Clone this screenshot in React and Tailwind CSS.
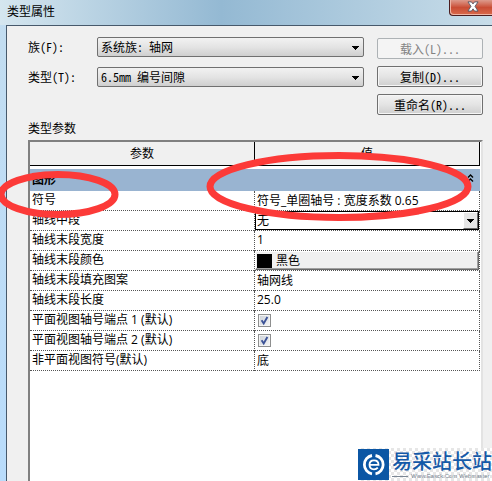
import clsx from 'clsx';

const ROWS = [
  { id: 'symbol', name: '符号', type: 'text', value: '符号_单圈轴号 : 宽度系数 0.65' },
  { id: 'mid', name: '轴线中段', type: 'select', value: '无' },
  { id: 'end-width', name: '轴线末段宽度', type: 'text', value: '1' },
  { id: 'end-color', name: '轴线末段颜色', type: 'color', value: '黑色' },
  { id: 'end-pattern', name: '轴线末段填充图案', type: 'text', value: '轴网线' },
  { id: 'end-length', name: '轴线末段长度', type: 'text', value: '25.0' },
  { id: 'plan-end-1', name: '平面视图轴号端点 1 (默认)', type: 'check' },
  { id: 'plan-end-2', name: '平面视图轴号端点 2 (默认)', type: 'check' },
  { id: 'non-plan', name: '非平面视图符号(默认)', type: 'text', value: '底' },
];

function Arrow({ className }) {
  return (
    <svg className={clsx('pointer-events-none', className)} width="7" height="4" viewBox="0 0 7 4" shapeRendering="crispEdges">
      <path d="M0 0h7v1H6v1H5v1H4v1H3V3H2V2H1V1H0z" fill="#000" />
    </svg>
  );
}

function ComboRow({ id, label, value }) {
  return (
    <div className="flex items-center">
      <label htmlFor={id} className="w-[69px] shrink-0">{label}</label>
      <div className="relative flex-1">
        <select
          id={id}
          className="block w-full h-5 pl-[3px] appearance-none rounded-[2px] border border-[#707070] bg-linear-to-b from-[#f2f2f2] via-[#e4e4e4] to-[#cfcfcf] leading-[18px]"
        >
          <option>{value}</option>
        </select>
        <Arrow className="absolute right-[5px] top-[9px]" />
      </div>
    </div>
  );
}

function DialogButton({ children, disabled }) {
  return (
    <button
      type="button"
      disabled={disabled}
      className={clsx(
        'h-[21px] rounded-[2px] border leading-[18px]',
        disabled
          ? 'border-[#adb2b5] bg-[#f4f4f4] text-[#838383]'
          : 'border-[#707070] bg-linear-to-b from-[#f2f2f2] via-[#e4e4e4] to-[#cfcfcf] shadow-[inset_0_0_0_1px_#f6f6f6]'
      )}
    >
      {children}
    </button>
  );
}

function Value({ row }) {
  if (row.type === 'select') {
    return (
      <div className="relative">
        <select id={row.id} className="block w-full h-[19px] pl-px appearance-none border border-black bg-white leading-4">
          <option>{row.value}</option>
        </select>
        <span className="pointer-events-none absolute right-px top-px flex h-[17px] w-[15px] items-center justify-center border border-t-white border-l-white border-r-[#696969] border-b-[#696969] bg-[#e6e6e6]">
          <Arrow />
        </span>
      </div>
    );
  }
  if (row.type === 'color') {
    return (
      <button
        id={row.id}
        type="button"
        className="flex h-[19px] w-full items-center gap-1 border border-t-white border-l-white border-r-[#696969] border-b-[#696969] bg-[#f0f0f0] pl-px shadow-[inset_-1px_-1px_0_#a0a0a0]"
      >
        <span className="h-[14px] w-[15px] bg-black" />
        {row.value}
      </button>
    );
  }
  if (row.type === 'check') {
    return (
      <div className="relative flex h-[19px] items-center pl-[3px]">
        <input
          id={row.id}
          type="checkbox"
          defaultChecked
          className="peer size-[13px] appearance-none border border-[#8e8f8f] bg-linear-to-br from-[#cdd2d8] to-[#f6f6f6] shadow-[inset_0_0_0_1px_#f4f4f4]"
        />
        <svg className="pointer-events-none absolute left-[3px] hidden peer-checked:block" width="13" height="13" viewBox="0 0 13 13">
          <path d="M3.6 6.2l2.1 3.2L9.4 3" fill="none" stroke="#3d5397" strokeWidth="1.9" />
        </svg>
      </div>
    );
  }
  return (
    <input id={row.id} type="text" defaultValue={row.value} className="block h-[19px] w-full bg-transparent pb-[2px] pl-[2px] outline-none" />
  );
}

function ParameterTable() {
  return (
    <table className="w-full table-fixed border-separate border-spacing-0 font-['Open_Sans','Noto_Sans_CJK_SC',sans-serif] text-xs leading-4">
      <thead>
        <tr className="h-6 bg-[#f0f0f0]">
          <th className="w-[224px] border-b border-black p-0 font-normal">参数</th>
          <th className="border-x border-b border-black p-0 font-normal">值</th>
        </tr>
      </thead>
      <tbody>
        <tr className="h-[25px]">
          <td colSpan={2} className="border-t-3 border-white bg-[#99b4d1] px-[2px] py-0">
            <div className="flex items-center justify-between pr-1 font-bold">
              图形
              <button type="button" aria-label="折叠" className="pb-1">
                <svg width="7" height="8" viewBox="0 0 7 8" fill="none" stroke="#000" strokeWidth="1.4">
                  <path d="M1 3.5L3.5 1L6 3.5M1 7.5L3.5 5L6 7.5" />
                </svg>
              </button>
            </div>
          </td>
        </tr>
        {ROWS.map((row) => (
          <tr key={row.id} className="h-5">
            <td className="border-b border-dotted border-[#555] pt-0 pr-0 pb-[2px] pl-[2px]">
              <label htmlFor={row.id} className="block">{row.name}</label>
            </td>
            <td className="border-x border-b border-dotted border-[#555] p-0">
              <Value row={row} />
            </td>
          </tr>
        ))}
      </tbody>
    </table>
  );
}

function Watermark() {
  return (
    <div className="absolute right-0 bottom-0 flex h-[33px] w-[134px] items-center gap-[3px] bg-white bg-[repeating-conic-gradient(#e6e6e6_0_25%,#fff_0_50%)] bg-[length:6px_6px] text-[#1459a8]">
      <svg className="shrink-0" width="31" height="31" viewBox="0 0 31 31" fill="none">
        <path d="M0 0h31v31H0z" fill="#0b56a4" />
        <path d="M14 6.5A9.300 9.300 0 0 0 14 24.800M17.500 6.500A9.300 9.300 0 0 1 17.500 24.800" stroke="#fff" strokeWidth="2.8" />
        <path d="M11 15.800h9.500c0-2.700-1.800-4.500-4.500-4.500s-4.500 1.900-4.500 4.500 1.800 4.500 4.500 4.500c1.600 0 2.900-.6 3.800-1.700" stroke="#fff" strokeWidth="1.800" />
      </svg>
      <div className="whitespace-nowrap">
        <div className="font-['Noto_Sans_CJK_SC',sans-serif] text-[20px] leading-[24px] font-medium">易采站长站</div>
        <div className="flex items-center gap-[3px] font-['Liberation_Sans',sans-serif] text-[6px] leading-[7px] text-[#7b8794]">
          <span className="h-px w-4 bg-[#7b8794]" />
          Www.Easck.Com Webmaster
        </div>
      </div>
    </div>
  );
}

export default function App() {
  return (
    <div className="relative flex min-h-screen flex-col overflow-hidden bg-linear-to-b from-[#c3ddf0] to-[#b9dcfb] font-['Noto_Sans_CJK_SC',sans-serif] text-xs leading-4 text-black">
      <header className="flex h-[25px] shrink-0 items-start justify-between bg-linear-to-r from-[#d5e6ef] via-[#94b9d3] via-45% to-[#c8dde9] pl-[7px]">
        <h1 className="pt-[3px]">类型属性</h1>
        <button
          type="button"
          aria-label="关闭"
          className="flex h-4 w-[43px] items-center justify-center rounded-bl-[4px] border border-t-0 border-r-0 border-[#4b1d1f] bg-linear-to-b from-[#dc9a8c] via-[#c94d35] via-50% to-[#d96a4c] pb-[3px] pl-1 shadow-[inset_1px_-1px_0_#eeb5a5]"
        >
          <svg width="12" height="11" viewBox="0 0 13 12">
            <path d="M1 1h3.8l1.7 2.2L8.2 1H12L8.7 5.8 12 11H8.2L6.5 8.6 4.8 11H1l3.3-5.2z" fill="#fff" stroke="#535666" />
          </svg>
        </button>
      </header>

      <main className="ml-[6px] flex flex-1 flex-col border-t border-l border-[#47596b] bg-[#f0f0f0] pr-[9px] pl-[21px]">
        <form className="flex gap-[13px] pt-[11px] [font-feature-settings:'hwid']">
          <div className="flex flex-1 flex-col gap-[10px]">
            <ComboRow id="family" label="族(F):" value="系统族: 轴网" />
            <ComboRow id="type" label="类型(T):" value="6.5mm 编号间隙" />
          </div>
          <div className="flex w-[106px] flex-col gap-[7px] pt-px">
            <DialogButton disabled>载入(L)...</DialogButton>
            <DialogButton>复制(D)...</DialogButton>
            <DialogButton>重命名(R)...</DialogButton>
          </div>
        </form>

        <h2 className="pt-[5px] pb-1">类型参数</h2>
        <section className="flex-1 border-t-2 border-r-2 border-l-2 border-t-[#808080] border-r-[#e3e3e3] border-l-[#808080] bg-white pr-px">
          <ParameterTable />
        </section>
      </main>

      {/* red marker circles over the symbol row */}
      <svg className="pointer-events-none absolute top-0 left-0" width="492" height="240" viewBox="0 0 492 240" fill="none" stroke="#fc3a38" strokeWidth="7">
        <ellipse cx="58" cy="194.5" rx="57" ry="20" />
        <ellipse cx="339" cy="186.5" rx="129" ry="31" />
      </svg>
      <Watermark />
    </div>
  );
}
